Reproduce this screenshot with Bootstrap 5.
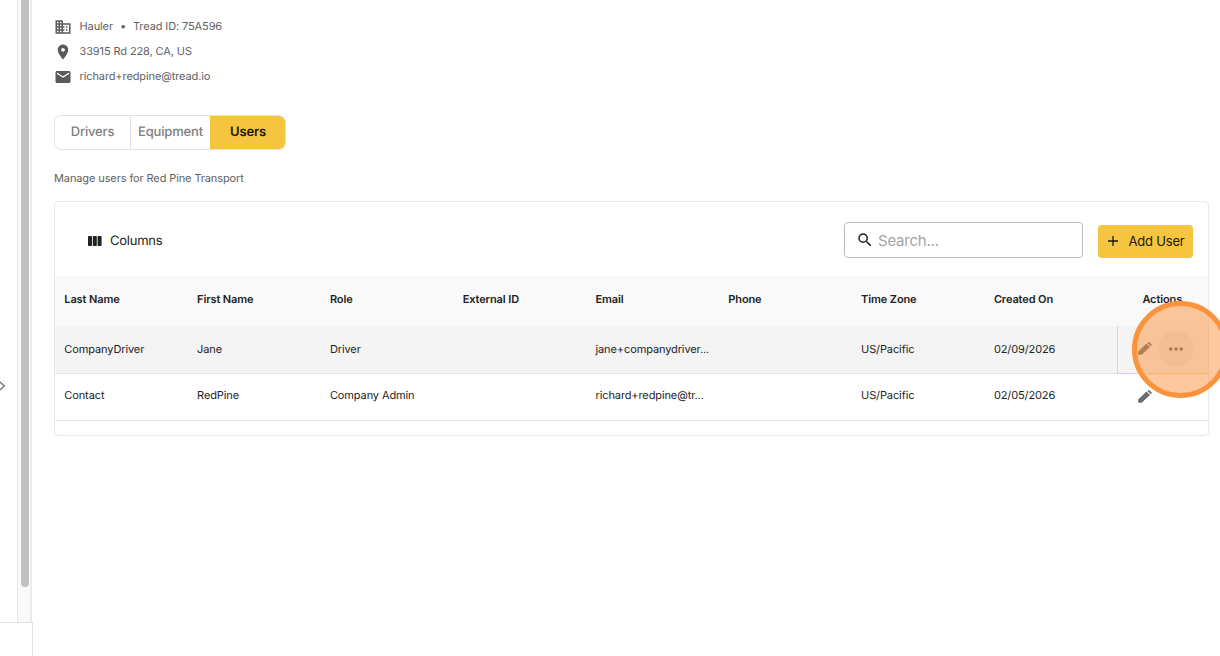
<!DOCTYPE html>
<html lang="en">
<head>
<meta charset="utf-8">
<meta name="viewport" content="width=device-width, initial-scale=1">
<title>Red Pine Transport - Users</title>
<link href="https://cdn.jsdelivr.net/npm/bootstrap@5.3.0/dist/css/bootstrap.min.css" rel="stylesheet">
<style>
  body { font-family: Inter, "Liberation Sans", sans-serif; font-size: 11px; line-height: 16px; letter-spacing: -.11px; text-rendering: geometricPrecision; color: #222; background: #fff; height: 656px; overflow: hidden; }
  .side { width: 33px; }
  .side-top { height: 623px; border-bottom: 1px solid #e3e3e3; }
  .side-page { width: 17px; }
  .side-track { width: 15px; background: #fafafa; border-left: 1px solid #e6e6e6; border-right: 2px solid #ececec; padding-left: 3px; }
  .side-thumb { width: 8px; height: 587px; background: #c1c1c1; border-radius: 0 0 4px 4px; }
  .side-foot { border-right: 1px solid #e3e3e3; }
  .side-arrow { left: -3px; top: 380px; }
  .content { padding: 14px 11px 0 21px; }
  .info { height: 25px; color: #616161; }
  .info span { margin-top: -2px; }
  .info svg { width: 18px; height: 18px; fill: #5a5a5a; margin-right: 7.5px; }
  .info .dot-sep { margin-left: 7px; margin-right: 7px; }
  .tabs { width: 232px; height: 35px; margin-top: 26px; border: 1px solid #e2e2e2; border-radius: 7px; overflow: hidden; font-size: 13px; letter-spacing: -.17px; font-weight: 500; color: #808080; }
  .tabs > a { color: inherit; text-decoration: none; padding-bottom: 1px; }
  .tab-a { width: 76px; border-right: 1px solid #e2e2e2; }
  .tab-b { width: 79px; }
  .tabs > .tab-c { background: #f5c53f; color: #1b1708; font-weight: 600; margin: -1px -1px -1px 0; width: 76px; padding-bottom: 1px; }
  .note { margin: 20px 0 15px; color: #616161; }
  .panel { height: 235px; border: 1px solid #e8e8e8; border-radius: 4px; }
  .tools { height: 74px; padding: 2px 15px 0 33px; font-size: 13px; letter-spacing: -.24px; }
  .tools > svg, .tools > span { margin-top: 1px; }
  .search { width: 239px; height: 36px; border: 1px solid #bdbdbd; border-radius: 4px; padding: 0 11px; margin-right: 15px; margin-top: -1px; font-size: 15px; }
  .search input { border: 0; outline: 0; padding: 2px 0 0; width: 180px; background: none; font-size: 15px; letter-spacing: -.22px; }
  .search input::placeholder { color: #a5a5a5; opacity: 1; }
  .add { width: 95px; height: 33px; background: #f5c53f; border: 0; border-radius: 4px; color: #1b1708; font-size: 13px; letter-spacing: -.2px; margin-top: 2px; padding: 0 1px 1px 0; }
  .add svg { margin: 0 9px 0 0; }
  .grid-row { display: grid; grid-template-columns: repeat(8, 132.8px) 1fr; height: 47px; border-bottom: 1px solid #e5e5e5; align-items: center; }
  .grid-row > div { padding: 0 0 2px 9.3px; }
  .grid-head { height: 50px; background: #f9f9f9; border: 0; font-weight: 600; }
  .grid-head > div { padding-bottom: 4px; }
  .grid-head > .acts-head { padding-left: 25px; }
  .grid-hover { background: #f4f4f4; height: 48px; }
  .grid-row.grid-plain > div { padding-bottom: 4px; }
  .grid-row > .acts { align-self: start; height: 48px; padding-left: 21px; }
  .grid-row.grid-plain > .acts { height: 46px; padding-bottom: 1px; }
  .grid-row.grid-hover > .acts { border: 0 solid #fbd58a; border-width: 0 0 1px 1px; padding: 0 0 2px 20px; }
  .dots { width: 36px; height: 36px; border-radius: 50%; background: #ebebeb; margin-left: 6px; }
  .spot { left: 1132px; top: 301px; width: 97px; height: 97px; border-radius: 50%; border: 5px solid #fb923c; background: rgba(253,146,61,.5); }
</style>
</head>
<body class="d-flex position-relative">
<aside class="side d-flex flex-column flex-shrink-0">
  <div class="side-top d-flex"><div class="side-page"></div><div class="side-track"><div class="side-thumb"></div></div></div>
  <div class="side-foot flex-grow-1"></div>
  <svg class="side-arrow position-absolute" width="9" height="12" fill="none" stroke="#777" stroke-width="1.4"><path d="M3 2l4.3 4L3 10"/></svg>
</aside>
<main class="content flex-grow-1">
  <div class="info d-flex align-items-center"><svg viewBox="0 0 24 24"><path d="M12 7V3H2v18h20V7H12zM6 19H4v-2h2v2zm0-4H4v-2h2v2zm0-4H4V9h2v2zm0-4H4V5h2v2zm4 12H8v-2h2v2zm0-4H8v-2h2v2zm0-4H8V9h2v2zm0-4H8V5h2v2zm10 12h-8v-2h2v-2h-2v-2h2v-2h-2V9h8v10zm-2-8h-2v2h2v-2zm0 4h-2v2h2v-2z"/></svg><span>Hauler</span><span class="dot-sep">•</span><span>Tread ID: 75A596</span></div>
  <div class="info d-flex align-items-center"><svg viewBox="0 0 24 24"><path d="M12 2C8.13 2 5 5.13 5 9c0 5.25 7 13 7 13s7-7.75 7-13c0-3.87-3.13-7-7-7zm0 9.5a2.5 2.5 0 0 1 0-5 2.5 2.5 0 0 1 0 5z"/></svg><span>33915 Rd 228, CA, US</span></div>
  <div class="info d-flex align-items-center"><svg viewBox="0 0 24 24"><path d="M20 4H4c-1.1 0-2 .9-2 2v12c0 1.1.9 2 2 2h16c1.1 0 2-.9 2-2V6c0-1.1-.9-2-2-2zm0 4l-8 5-8-5V6l8 5 8-5v2z"/></svg><span>richard+redpine@tread.io</span></div>
  <nav class="tabs d-flex">
    <a href="#" class="tab-a d-flex align-items-center justify-content-center">Drivers</a>
    <a href="#" class="tab-b d-flex align-items-center justify-content-center">Equipment</a>
    <a href="#" class="tab-c d-flex align-items-center justify-content-center">Users</a>
  </nav>
  <p class="note">Manage users for Red Pine Transport</p>
  <section class="panel">
    <div class="tools d-flex align-items-center">
      <svg width="14" height="10" fill="#222"><rect width="4" height="10" rx=".8"/><rect x="4.8" width="4" height="10" rx=".8"/><rect x="9.6" width="4" height="10" rx=".8"/></svg>
      <span class="ms-2 me-auto">Columns</span>
      <label class="search d-flex align-items-center"><svg class="me-1" width="18" height="18" viewBox="0 0 24 24" fill="#222"><path d="M15.5 14h-.79l-.28-.27A6.47 6.47 0 0 0 16 9.5 6.5 6.5 0 1 0 9.5 16c1.61 0 3.09-.59 4.23-1.57l.27.28v.79l5 4.99L20.49 19l-4.99-5zm-6 0C7.01 14 5 11.99 5 9.5S7.01 5 9.5 5 14 7.01 14 9.5 11.99 14 9.5 14z"/></svg><input type="text" placeholder="Search..."></label>
      <button class="add d-flex align-items-center justify-content-center"><svg width="14" height="14" fill="none" stroke="#1b1708" stroke-width="1.3"><path d="M7 2v10M2 7h10"/></svg>Add User</button>
    </div>
    <div class="grid-row grid-head"><div>Last Name</div><div>First Name</div><div>Role</div><div>External ID</div><div>Email</div><div>Phone</div><div>Time Zone</div><div>Created On</div><div class="acts-head">Actions</div></div>
    <div class="grid-row grid-hover"><div>CompanyDriver</div><div>Jane</div><div>Driver</div><div></div><div>jane+companydriver...</div><div></div><div>US/Pacific</div><div>02/09/2026</div>
      <div class="acts d-flex align-items-center"><svg width="14" height="13" fill="#6b6b6b"><path d="M.2 12.7V9.4L8.5 1.6l3.5 3.3-8.3 7.8zM9.5 1l.8-.7q.6-.5 1.2 0l2 2q.5.6 0 1.2l-.7.7z"/></svg><div class="dots d-flex align-items-center justify-content-center"><svg width="16" height="4" fill="#555"><circle cx="2.8" cy="2" r="1.7"/><circle cx="8" cy="2" r="1.7"/><circle cx="13.2" cy="2" r="1.7"/></svg></div></div></div>
    <div class="grid-row grid-plain"><div>Contact</div><div>RedPine</div><div>Company Admin</div><div></div><div>richard+redpine@tr...</div><div></div><div>US/Pacific</div><div>02/05/2026</div>
      <div class="acts d-flex align-items-center"><svg width="14" height="13" fill="#6b6b6b"><path d="M.2 12.7V9.4L8.5 1.6l3.5 3.3-8.3 7.8zM9.5 1l.8-.7q.6-.5 1.2 0l2 2q.5.6 0 1.2l-.7.7z"/></svg></div></div>
  </section>
</main>
<div class="spot position-absolute"></div>
<script src="https://cdn.jsdelivr.net/npm/bootstrap@5.3.0/dist/js/bootstrap.bundle.min.js"></script>
</body>
</html>
